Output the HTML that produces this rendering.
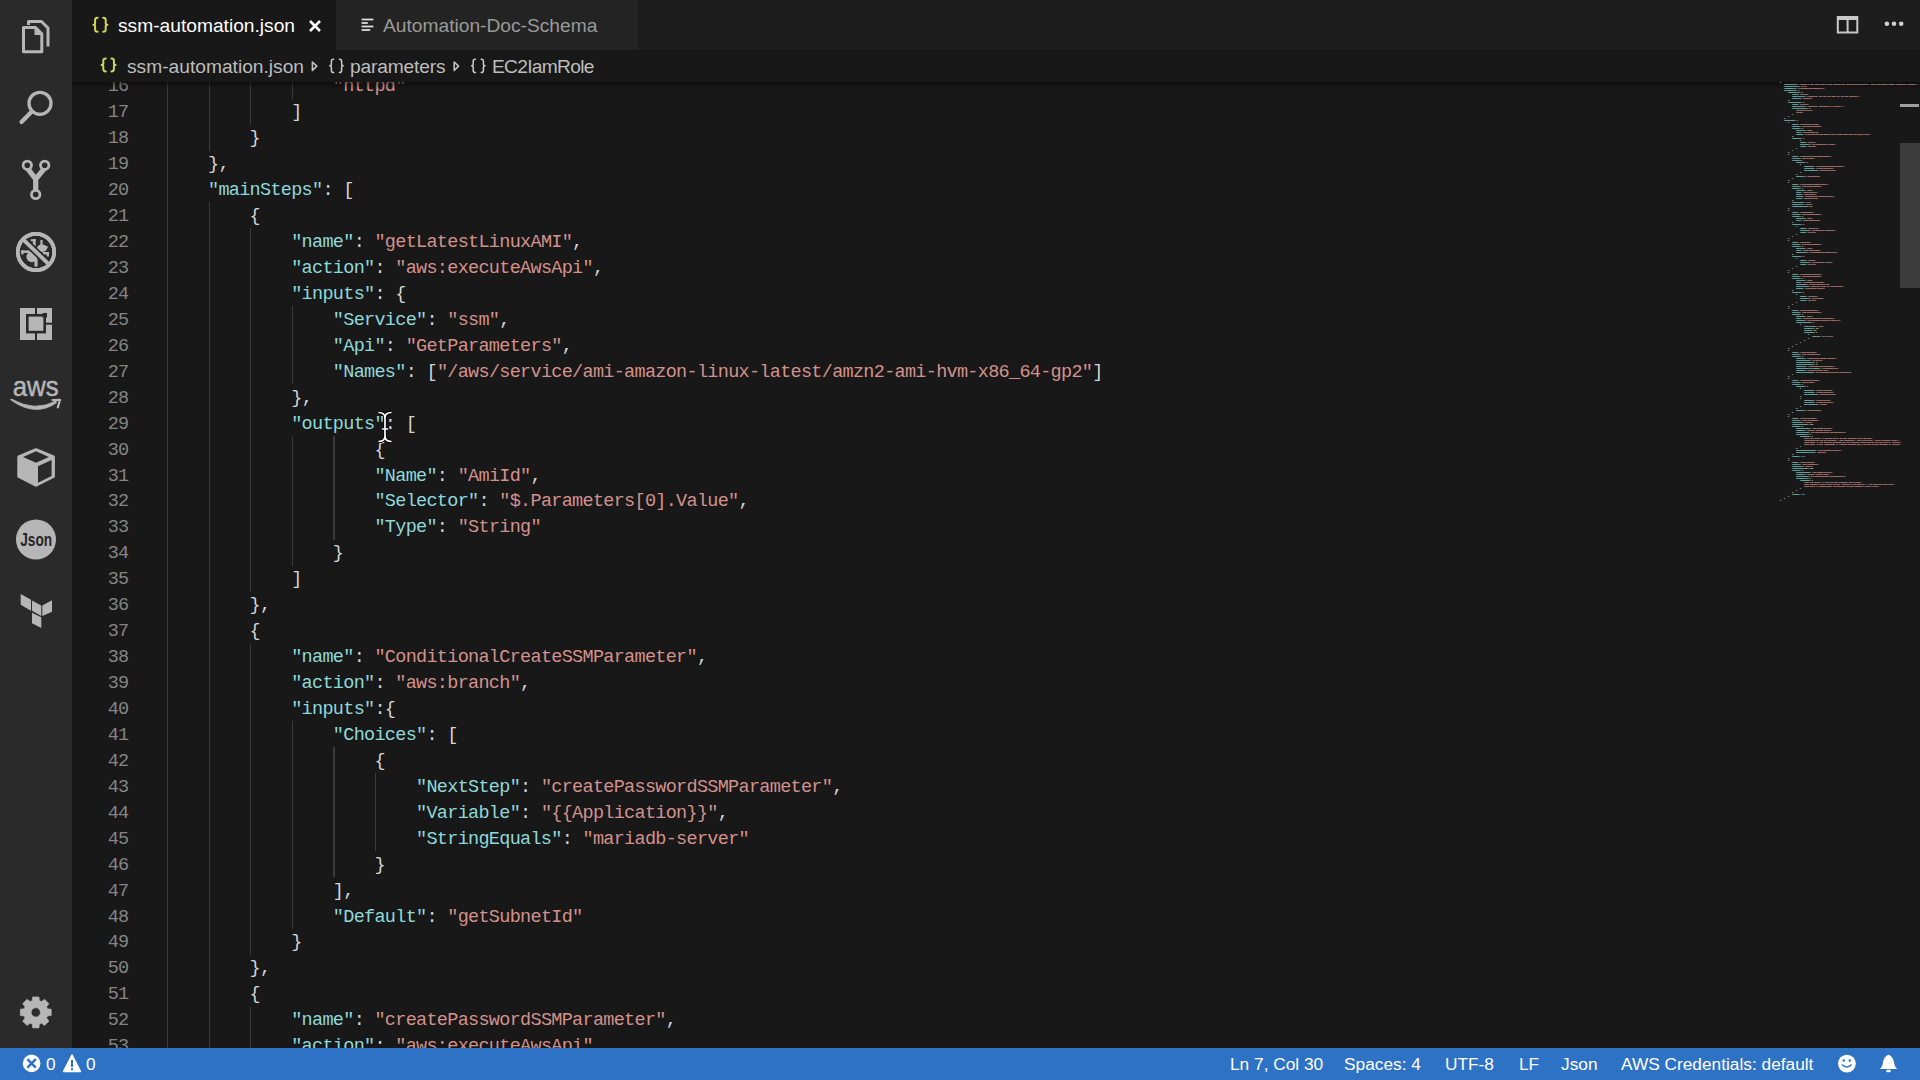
<!DOCTYPE html>
<html><head><meta charset="utf-8"><style>
*{box-sizing:border-box}
html,body{margin:0;padding:0;width:1920px;height:1080px;overflow:hidden;background:#181818;font-family:"Liberation Sans",sans-serif}
.abs{position:absolute}
#act{position:absolute;left:0;top:0;width:72px;height:1048px;background:#2a2a2a}
#tabs{position:absolute;left:72px;top:0;width:1848px;height:50px;background:#1d1d1d}
#tab1{position:absolute;left:0;top:0;width:264px;height:50px;background:#181818}
#tab2{position:absolute;left:264px;top:0;width:302px;height:50px;background:#232323}
#crumbs{position:absolute;left:72px;top:50px;width:1848px;height:32px;background:#181818}
#editor{position:absolute;left:72px;top:82px;width:1848px;height:966px;background:#181818;overflow:hidden}
.ln{position:absolute;left:94.4px;height:25.943px;line-height:25.943px;white-space:pre;font-family:"Liberation Mono",monospace;font-size:18.5px;letter-spacing:-0.700px;color:#d4d4d4}
.num{position:absolute;left:0;width:56.5px;text-align:right;height:25.943px;line-height:25.943px;font-family:"Liberation Mono",monospace;font-size:18.5px;letter-spacing:-0.700px;color:#858585}
.g{position:absolute;width:1.3px;background:#3a3a3a}
#shadow{position:absolute;left:0;top:0;width:1848px;height:7px;background:linear-gradient(rgba(0,0,0,0.45),rgba(0,0,0,0))}
#status{position:absolute;left:0;top:1048px;width:1920px;height:32px;background:#2e72c5;color:#fff;font-size:17.3px}
.st{position:absolute;top:0;height:32px;line-height:32px;white-space:pre}
.tabt{position:absolute;top:1px;height:50px;line-height:50px;white-space:pre;font-size:19.2px}
.cr{position:absolute;top:0.5px;height:32px;line-height:32px;white-space:pre;font-size:19.2px;color:#bdbdbd}
</style></head><body>
<div id="act">
<svg width="72" height="1048" viewBox="0 0 72 1048" style="position:absolute;left:0;top:0">
 <g fill="none" stroke="#b6b6b6" stroke-width="3" stroke-linejoin="round">
  <path d="M28.5 25 V21.5 H41.5 L48 28 V46.5"/>
  <path d="M23.5 27.5 H35.5 L41.8 33.8 V51.8 H23.5 Z"/>
 </g>
 <path d="M34.5 27 V35 H42.5 Z" fill="#b6b6b6"/>
 <circle cx="40" cy="103.3" r="11" fill="none" stroke="#b6b6b6" stroke-width="3.3"/>
 <line x1="31.8" y1="111.6" x2="21.5" y2="122" stroke="#b6b6b6" stroke-width="4.2" stroke-linecap="round"/>
 <g fill="none" stroke="#b6b6b6">
  <circle cx="27.3" cy="165.3" r="4.2" stroke-width="2.8"/>
  <circle cx="44.7" cy="165.3" r="4.2" stroke-width="2.8"/>
  <circle cx="35.7" cy="194.5" r="4.2" stroke-width="2.8"/>
  <path d="M28.3 169.3 L35.7 179 L43.7 169.3 M35.7 179 V190" stroke-width="5.2"/>
 </g>
 <circle cx="36" cy="252" r="18.2" fill="none" stroke="#b6b6b6" stroke-width="3.7"/>
 <g fill="#b6b6b6">
  <rect x="30.8" y="239.2" width="5" height="2"/>
  <rect x="32.8" y="239.2" width="2.8" height="7"/>
  <rect x="40.4" y="240" width="2.2" height="6"/>
  <ellipse cx="42" cy="248.3" rx="5" ry="3.8"/>
  <rect x="42.6" y="246" width="5" height="2.2"/>
  <rect x="42.6" y="252" width="6.4" height="2.5"/>
  <rect x="46.6" y="252" width="2.4" height="4.5"/>
  <rect x="21.3" y="250.4" width="9" height="2.5"/>
  <rect x="21.3" y="250.4" width="2.2" height="4"/>
  <circle cx="31.8" cy="256.8" r="5.4"/>
  <rect x="34.4" y="258.6" width="3.2" height="8"/>
 </g>
 <line x1="22.8" y1="239.2" x2="49.2" y2="264.6" stroke="#2a2a2a" stroke-width="7.2"/>
 <line x1="22.5" y1="238.9" x2="49.5" y2="264.9" stroke="#b6b6b6" stroke-width="3.9"/>
 <circle cx="36" cy="252" r="18.2" fill="none" stroke="#b6b6b6" stroke-width="3.7"/>
 <g>
  <rect x="20" y="308" width="32" height="32" fill="#b6b6b6"/>
  <rect x="27.3" y="315.3" width="17.4" height="16.8" fill="none" stroke="#2a2a2a" stroke-width="2.6"/>
  <rect x="35" y="308" width="2" height="7" fill="#2a2a2a"/>
  <rect x="35" y="332" width="2" height="8" fill="#2a2a2a"/>
  <rect x="46" y="322.7" width="6" height="2" fill="#2a2a2a"/>
  <rect x="42.6" y="313" width="4.4" height="4.5" fill="#2a2a2a"/>
 </g>
 <text x="35.7" y="396" text-anchor="middle" font-family="Liberation Sans" font-size="28.5" fill="#b6b6b6" stroke="#b6b6b6" stroke-width="0.5" textLength="46" lengthAdjust="spacingAndGlyphs">aws</text>
 <path d="M10.6 399.8 Q35 417.5 56.5 402.8 L56 400.8 Q35 412.5 11.4 399 Z" fill="#b6b6b6" stroke="#b6b6b6" stroke-width="0.8" stroke-linejoin="round"/>
 <path d="M52.5 400 L60 399.8 L57.8 407.5" fill="none" stroke="#b6b6b6" stroke-width="2.2" stroke-linecap="round" stroke-linejoin="round"/>
 <g stroke="#b6b6b6" stroke-width="3" stroke-linejoin="round">
  <path d="M36 449.7 L53.4 457 V476.5 L36 485.2 L18.8 476.5 V457 Z" fill="#b6b6b6"/>
  <path d="M23.1 456.9 L36 451.3 L48.9 456.9 L36 462.7 Z" fill="#2a2a2a" stroke="none"/>
  <path d="M38 466.2 L51.6 460 V476 L38 482.7 Z" fill="#2a2a2a" stroke="none"/>
 </g>
 <circle cx="36" cy="539.5" r="20" fill="#b6b6b6"/>
 <text x="36.2" y="546.2" text-anchor="middle" font-family="Liberation Sans" font-weight="bold" font-size="17.6" fill="#262626" textLength="32" lengthAdjust="spacingAndGlyphs">Json</text>
 <g fill="#b6b6b6">
  <path d="M20.7 594 L31 599.8 V610.7 L20.7 604.7 Z"/>
  <path d="M32 600.5 L41.3 605.5 V616 L32 610.7 Z"/>
  <path d="M42.3 605.5 L52 600.3 V611.7 L42.3 616 Z"/>
  <path d="M32 612.7 L41.3 617.3 V628 L32 623.3 Z"/>
 </g>
 <g transform="translate(35.8 1012.4)" fill="#b6b6b6">
  <path id="gear" d="M-3.64 -11.64 L-3.13 -15.49 L3.13 -15.49 L3.64 -11.64 A12.2 12.2 0 0 1 5.66 -10.81 L8.74 -13.16 L13.16 -8.74 L10.81 -5.66 A12.2 12.2 0 0 1 11.64 -3.64 L15.49 -3.13 L15.49 3.13 L11.64 3.64 A12.2 12.2 0 0 1 10.81 5.66 L13.16 8.74 L8.74 13.16 L5.66 10.81 A12.2 12.2 0 0 1 3.64 11.64 L3.13 15.49 L-3.13 15.49 L-3.64 11.64 A12.2 12.2 0 0 1 -5.66 10.81 L-8.74 13.16 L-13.16 8.74 L-10.81 5.66 A12.2 12.2 0 0 1 -11.64 3.64 L-15.49 3.13 L-15.49 -3.13 L-11.64 -3.64 A12.2 12.2 0 0 1 -10.81 -5.66 L-13.16 -8.74 L-8.74 -13.16 L-5.66 -10.81 A12.2 12.2 0 0 1 -3.64 -11.64 Z M0 -4.6 A4.6 4.6 0 1 0 0 4.6 A4.6 4.6 0 1 0 0 -4.6 Z" stroke="#b6b6b6" stroke-width="0.6" stroke-linejoin="round" fill-rule="evenodd"/>
 </g>
</svg>
</div>

<div id="tabs">
 <div id="tab1">
  <div class="tabt" style="left:46px;color:#ffffff">ssm-automation.json</div>
  <svg class="abs" style="left:236px;top:19px" width="14" height="14" viewBox="0 0 14 14"><path d="M2 2 L12 12 M12 2 L2 12" stroke="#ffffff" stroke-width="2.6"/></svg>
 </div>
 <div id="tab2">
  <svg class="abs" style="left:25px;top:18px" width="14" height="14" viewBox="0 0 14 14" fill="#dcdcdc"><rect x="0.6" y="0.6" width="11.8" height="1.8"/><rect x="0.6" y="4.1" width="6.2" height="1.8"/><rect x="0.6" y="7.6" width="11.8" height="1.8"/><rect x="0.6" y="11.1" width="8.6" height="1.8"/></svg>
  <div class="tabt" style="left:47px;color:#9a9a9a">Automation-Doc-Schema</div>
 </div>
 <svg class="abs" style="left:1764px;top:15px" width="24" height="20" viewBox="0 0 24 20"><rect x="1.8" y="2" width="19.5" height="15.5" fill="none" stroke="#c8c8c8" stroke-width="2"/><rect x="1.8" y="1.5" width="19.5" height="3.5" fill="#c8c8c8"/><rect x="10.6" y="2" width="2" height="15.5" fill="#c8c8c8"/></svg>
 <svg class="abs" style="left:1810px;top:18px" width="24" height="12" viewBox="0 0 24 12" fill="#d0d0d0"><circle cx="4.9" cy="5.7" r="2.3"/><circle cx="12" cy="5.7" r="2.3"/><circle cx="19.2" cy="5.7" r="2.3"/></svg>
</div>

<div id="crumbs">
 <div class="cr" style="left:55px">ssm-automation.json</div>
 <div class="cr" style="left:278px;letter-spacing:-0.17px">parameters</div>
 <div class="cr" style="left:420px;letter-spacing:-0.7px">EC2IamRole</div>
</div>

<svg class="abs" style="left:0;top:0;z-index:5" width="600" height="90" viewBox="0 0 600 90">
<path d="M97.59 17.80 Q95.10 17.80 95.10 20.04 V23.23 Q95.10 24.80 93.40 24.80 Q95.10 24.80 95.10 26.37 V29.56 Q95.10 31.80 97.59 31.80 M103.21 17.80 Q105.70 17.80 105.70 20.04 V23.23 Q105.70 24.80 107.40 24.80 Q105.70 24.80 105.70 26.37 V29.56 Q105.70 31.80 103.21 31.80" fill="none" stroke="#cfd85c" stroke-width="2.0" stroke-linecap="round" stroke-linejoin="round"/>
<path d="M105.79 58.40 Q103.30 58.40 103.30 60.50 V63.43 Q103.30 64.90 101.60 64.90 Q103.30 64.90 103.30 66.37 V69.30 Q103.30 71.40 105.79 71.40 M111.41 58.40 Q113.90 58.40 113.90 60.50 V63.43 Q113.90 64.90 115.60 64.90 Q113.90 64.90 113.90 66.37 V69.30 Q113.90 71.40 111.41 71.40" fill="none" stroke="#cfd85c" stroke-width="2.0" stroke-linecap="round" stroke-linejoin="round"/>
<path d="M333.58 59.15 Q331.39 59.15 331.39 61.22 V64.35 Q331.39 65.80 329.80 65.80 Q331.39 65.80 331.39 67.25 V70.38 Q331.39 72.45 333.58 72.45 M339.42 59.15 Q341.61 59.15 341.61 61.22 V64.35 Q341.61 65.80 343.20 65.80 Q341.61 65.80 341.61 67.25 V70.38 Q341.61 72.45 339.42 72.45" fill="none" stroke="#cccccc" stroke-width="1.5" stroke-linecap="round" stroke-linejoin="round"/>
<path d="M475.38 59.15 Q473.19 59.15 473.19 61.22 V64.35 Q473.19 65.80 471.60 65.80 Q473.19 65.80 473.19 67.25 V70.38 Q473.19 72.45 475.38 72.45 M481.22 59.15 Q483.41 59.15 483.41 61.22 V64.35 Q483.41 65.80 485.00 65.80 Q483.41 65.80 483.41 67.25 V70.38 Q483.41 72.45 481.22 72.45" fill="none" stroke="#cccccc" stroke-width="1.5" stroke-linecap="round" stroke-linejoin="round"/>
<path d="M312.4 62 L316.8 66.2 L312.4 70.4 Z M454.2 62 L458.6 66.2 L454.2 70.4 Z" fill="none" stroke="#c0c0c0" stroke-width="1.6" stroke-linejoin="round"/>
</svg>
<div id="editor">
<div class="g" style="left:95.00px;top:-9.24px;height:985.83px"></div>
<div class="g" style="left:136.60px;top:-9.24px;height:77.83px"></div>
<div class="g" style="left:136.60px;top:120.47px;height:856.12px"></div>
<div class="g" style="left:178.20px;top:-9.24px;height:51.89px"></div>
<div class="g" style="left:178.20px;top:146.42px;height:363.20px"></div>
<div class="g" style="left:178.20px;top:561.50px;height:311.32px"></div>
<div class="g" style="left:178.20px;top:924.70px;height:51.89px"></div>
<div class="g" style="left:219.80px;top:-9.24px;height:25.94px"></div>
<div class="g" style="left:219.80px;top:224.24px;height:77.83px"></div>
<div class="g" style="left:219.80px;top:353.96px;height:129.71px"></div>
<div class="g" style="left:219.80px;top:639.33px;height:207.54px"></div>
<div class="g" style="left:261.40px;top:353.96px;height:103.77px"></div>
<div class="g" style="left:261.40px;top:665.28px;height:129.72px"></div>
<div class="g" style="left:303.00px;top:691.22px;height:77.83px"></div>
<div class="ln" style="top:-7.64px">                <span style="color:#d4918c">&quot;httpd&quot;</span></div>
<div class="num" style="top:-7.64px">16</div>
<div class="ln" style="top:18.30px">            <span style="color:#d4d4d4">]</span></div>
<div class="num" style="top:18.30px">17</div>
<div class="ln" style="top:44.24px">        <span style="color:#d4d4d4">}</span></div>
<div class="num" style="top:44.24px">18</div>
<div class="ln" style="top:70.19px">    <span style="color:#d4d4d4">}</span><span style="color:#d4d4d4">,</span></div>
<div class="num" style="top:70.19px">19</div>
<div class="ln" style="top:96.13px">    <span style="color:#8fd8da">&quot;mainSteps&quot;</span><span style="color:#d4d4d4">:</span> <span style="color:#d4d4d4">[</span></div>
<div class="num" style="top:96.13px">20</div>
<div class="ln" style="top:122.07px">        <span style="color:#d4d4d4">{</span></div>
<div class="num" style="top:122.07px">21</div>
<div class="ln" style="top:148.02px">            <span style="color:#8fd8da">&quot;name&quot;</span><span style="color:#d4d4d4">:</span> <span style="color:#d4918c">&quot;getLatestLinuxAMI&quot;</span><span style="color:#d4d4d4">,</span></div>
<div class="num" style="top:148.02px">22</div>
<div class="ln" style="top:173.96px">            <span style="color:#8fd8da">&quot;action&quot;</span><span style="color:#d4d4d4">:</span> <span style="color:#d4918c">&quot;aws:executeAwsApi&quot;</span><span style="color:#d4d4d4">,</span></div>
<div class="num" style="top:173.96px">23</div>
<div class="ln" style="top:199.90px">            <span style="color:#8fd8da">&quot;inputs&quot;</span><span style="color:#d4d4d4">:</span> <span style="color:#d4d4d4">{</span></div>
<div class="num" style="top:199.90px">24</div>
<div class="ln" style="top:225.84px">                <span style="color:#8fd8da">&quot;Service&quot;</span><span style="color:#d4d4d4">:</span> <span style="color:#d4918c">&quot;ssm&quot;</span><span style="color:#d4d4d4">,</span></div>
<div class="num" style="top:225.84px">25</div>
<div class="ln" style="top:251.79px">                <span style="color:#8fd8da">&quot;Api&quot;</span><span style="color:#d4d4d4">:</span> <span style="color:#d4918c">&quot;GetParameters&quot;</span><span style="color:#d4d4d4">,</span></div>
<div class="num" style="top:251.79px">26</div>
<div class="ln" style="top:277.73px">                <span style="color:#8fd8da">&quot;Names&quot;</span><span style="color:#d4d4d4">:</span> <span style="color:#d4d4d4">[</span><span style="color:#d4918c">&quot;/aws/service/ami-amazon-linux-latest/amzn2-ami-hvm-x86_64-gp2&quot;</span><span style="color:#d4d4d4">]</span></div>
<div class="num" style="top:277.73px">27</div>
<div class="ln" style="top:303.67px">            <span style="color:#d4d4d4">}</span><span style="color:#d4d4d4">,</span></div>
<div class="num" style="top:303.67px">28</div>
<div class="ln" style="top:329.62px">            <span style="color:#8fd8da">&quot;outputs&quot;</span><span style="color:#d4d4d4">:</span> <span style="color:#d4d4d4">[</span></div>
<div class="num" style="top:329.62px">29</div>
<div class="ln" style="top:355.56px">                    <span style="color:#d4d4d4">{</span></div>
<div class="num" style="top:355.56px">30</div>
<div class="ln" style="top:381.50px">                    <span style="color:#8fd8da">&quot;Name&quot;</span><span style="color:#d4d4d4">:</span> <span style="color:#d4918c">&quot;AmiId&quot;</span><span style="color:#d4d4d4">,</span></div>
<div class="num" style="top:381.50px">31</div>
<div class="ln" style="top:407.45px">                    <span style="color:#8fd8da">&quot;Selector&quot;</span><span style="color:#d4d4d4">:</span> <span style="color:#d4918c">&quot;$.Parameters[0].Value&quot;</span><span style="color:#d4d4d4">,</span></div>
<div class="num" style="top:407.45px">32</div>
<div class="ln" style="top:433.39px">                    <span style="color:#8fd8da">&quot;Type&quot;</span><span style="color:#d4d4d4">:</span> <span style="color:#d4918c">&quot;String&quot;</span></div>
<div class="num" style="top:433.39px">33</div>
<div class="ln" style="top:459.33px">                <span style="color:#d4d4d4">}</span></div>
<div class="num" style="top:459.33px">34</div>
<div class="ln" style="top:485.27px">            <span style="color:#d4d4d4">]</span></div>
<div class="num" style="top:485.27px">35</div>
<div class="ln" style="top:511.22px">        <span style="color:#d4d4d4">}</span><span style="color:#d4d4d4">,</span></div>
<div class="num" style="top:511.22px">36</div>
<div class="ln" style="top:537.16px">        <span style="color:#d4d4d4">{</span></div>
<div class="num" style="top:537.16px">37</div>
<div class="ln" style="top:563.10px">            <span style="color:#8fd8da">&quot;name&quot;</span><span style="color:#d4d4d4">:</span> <span style="color:#d4918c">&quot;ConditionalCreateSSMParameter&quot;</span><span style="color:#d4d4d4">,</span></div>
<div class="num" style="top:563.10px">38</div>
<div class="ln" style="top:589.05px">            <span style="color:#8fd8da">&quot;action&quot;</span><span style="color:#d4d4d4">:</span> <span style="color:#d4918c">&quot;aws:branch&quot;</span><span style="color:#d4d4d4">,</span></div>
<div class="num" style="top:589.05px">39</div>
<div class="ln" style="top:614.99px">            <span style="color:#8fd8da">&quot;inputs&quot;</span><span style="color:#d4d4d4">:</span><span style="color:#d4d4d4">{</span></div>
<div class="num" style="top:614.99px">40</div>
<div class="ln" style="top:640.93px">                <span style="color:#8fd8da">&quot;Choices&quot;</span><span style="color:#d4d4d4">:</span> <span style="color:#d4d4d4">[</span></div>
<div class="num" style="top:640.93px">41</div>
<div class="ln" style="top:666.88px">                    <span style="color:#d4d4d4">{</span></div>
<div class="num" style="top:666.88px">42</div>
<div class="ln" style="top:692.82px">                        <span style="color:#8fd8da">&quot;NextStep&quot;</span><span style="color:#d4d4d4">:</span> <span style="color:#d4918c">&quot;createPasswordSSMParameter&quot;</span><span style="color:#d4d4d4">,</span></div>
<div class="num" style="top:692.82px">43</div>
<div class="ln" style="top:718.76px">                        <span style="color:#8fd8da">&quot;Variable&quot;</span><span style="color:#d4d4d4">:</span> <span style="color:#d4918c">&quot;{{Application}}&quot;</span><span style="color:#d4d4d4">,</span></div>
<div class="num" style="top:718.76px">44</div>
<div class="ln" style="top:744.70px">                        <span style="color:#8fd8da">&quot;StringEquals&quot;</span><span style="color:#d4d4d4">:</span> <span style="color:#d4918c">&quot;mariadb-server&quot;</span></div>
<div class="num" style="top:744.70px">45</div>
<div class="ln" style="top:770.65px">                    <span style="color:#d4d4d4">}</span></div>
<div class="num" style="top:770.65px">46</div>
<div class="ln" style="top:796.59px">                <span style="color:#d4d4d4">]</span><span style="color:#d4d4d4">,</span></div>
<div class="num" style="top:796.59px">47</div>
<div class="ln" style="top:822.53px">                <span style="color:#8fd8da">&quot;Default&quot;</span><span style="color:#d4d4d4">:</span> <span style="color:#d4918c">&quot;getSubnetId&quot;</span></div>
<div class="num" style="top:822.53px">48</div>
<div class="ln" style="top:848.48px">            <span style="color:#d4d4d4">}</span></div>
<div class="num" style="top:848.48px">49</div>
<div class="ln" style="top:874.42px">        <span style="color:#d4d4d4">}</span><span style="color:#d4d4d4">,</span></div>
<div class="num" style="top:874.42px">50</div>
<div class="ln" style="top:900.36px">        <span style="color:#d4d4d4">{</span></div>
<div class="num" style="top:900.36px">51</div>
<div class="ln" style="top:926.30px">            <span style="color:#8fd8da">&quot;name&quot;</span><span style="color:#d4d4d4">:</span> <span style="color:#d4918c">&quot;createPasswordSSMParameter&quot;</span><span style="color:#d4d4d4">,</span></div>
<div class="num" style="top:926.30px">52</div>
<div class="ln" style="top:952.25px">            <span style="color:#8fd8da">&quot;action&quot;</span><span style="color:#d4d4d4">:</span> <span style="color:#d4918c">&quot;aws:executeAwsApi&quot;</span><span style="color:#d4d4d4">,</span></div>
<div class="num" style="top:952.25px">53</div>
<div id="shadow"></div>
<svg class="abs" style="left:0;top:0" width="1848" height="966" viewBox="72 82 1848 966">
<g transform="translate(1780 80.6) scale(0.16667 0.2)" font-family="Liberation Mono" font-size="10" font-weight="bold" stroke-width="1.2" opacity="0.8" style="white-space:pre">
<text y="13.2"><tspan x="0" fill="#d4d4d4" stroke="#d4d4d4">{</tspan></text>
<text y="23.2"><tspan x="24" fill="#8fd8da" stroke="#8fd8da">&quot;description&quot;</tspan><tspan x="102" fill="#d4d4d4" stroke="#d4d4d4">:</tspan><tspan x="114" fill="#d4918c" stroke="#d4918c">&quot;Creates a LAMP stack with an EC2 instance and optional MariaDB server, using AWS Systems Manager Automation document.&quot;</tspan><tspan x="828" fill="#d4d4d4" stroke="#d4d4d4">,</tspan></text>
<text y="33.2"><tspan x="24" fill="#8fd8da" stroke="#8fd8da">&quot;schemaVersion&quot;</tspan><tspan x="114" fill="#d4d4d4" stroke="#d4d4d4">:</tspan><tspan x="126" fill="#d4918c" stroke="#d4918c">&quot;0.3&quot;</tspan><tspan x="156" fill="#d4d4d4" stroke="#d4d4d4">,</tspan></text>
<text y="43.2"><tspan x="24" fill="#8fd8da" stroke="#8fd8da">&quot;assumeRole&quot;</tspan><tspan x="96" fill="#d4d4d4" stroke="#d4d4d4">:</tspan><tspan x="108" fill="#d4918c" stroke="#d4918c">&quot;{{AutomationAssumeRole}}&quot;</tspan><tspan x="264" fill="#d4d4d4" stroke="#d4d4d4">,</tspan></text>
<text y="53.2"><tspan x="24" fill="#8fd8da" stroke="#8fd8da">&quot;parameters&quot;</tspan><tspan x="96" fill="#d4d4d4" stroke="#d4d4d4">:</tspan><tspan x="108" fill="#d4d4d4" stroke="#d4d4d4">{</tspan></text>
<text y="63.2"><tspan x="48" fill="#8fd8da" stroke="#8fd8da">&quot;EC2IamRole&quot;</tspan><tspan x="120" fill="#d4d4d4" stroke="#d4d4d4">:</tspan><tspan x="132" fill="#d4d4d4" stroke="#d4d4d4">{</tspan></text>
<text y="73.2"><tspan x="72" fill="#8fd8da" stroke="#8fd8da">&quot;type&quot;</tspan><tspan x="108" fill="#d4d4d4" stroke="#d4d4d4">:</tspan><tspan x="120" fill="#d4918c" stroke="#d4918c">&quot;String&quot;</tspan><tspan x="168" fill="#d4d4d4" stroke="#d4d4d4">,</tspan></text>
<text y="83.2"><tspan x="72" fill="#8fd8da" stroke="#8fd8da">&quot;description&quot;</tspan><tspan x="150" fill="#d4d4d4" stroke="#d4d4d4">:</tspan><tspan x="162" fill="#d4918c" stroke="#d4918c">&quot;(Required) The IAM role name for the EC2 instance.&quot;</tspan><tspan x="474" fill="#d4d4d4" stroke="#d4d4d4">,</tspan></text>
<text y="93.2"><tspan x="72" fill="#8fd8da" stroke="#8fd8da">&quot;default&quot;</tspan><tspan x="126" fill="#d4d4d4" stroke="#d4d4d4">:</tspan><tspan x="138" fill="#d4918c" stroke="#d4918c">&quot;SSMRole&quot;</tspan></text>
<text y="103.2"><tspan x="48" fill="#d4d4d4" stroke="#d4d4d4">}</tspan><tspan x="54" fill="#d4d4d4" stroke="#d4d4d4">,</tspan></text>
<text y="113.2"><tspan x="48" fill="#8fd8da" stroke="#8fd8da">&quot;Application&quot;</tspan><tspan x="126" fill="#d4d4d4" stroke="#d4d4d4">:</tspan><tspan x="138" fill="#d4d4d4" stroke="#d4d4d4">{</tspan></text>
<text y="123.2"><tspan x="72" fill="#8fd8da" stroke="#8fd8da">&quot;type&quot;</tspan><tspan x="108" fill="#d4d4d4" stroke="#d4d4d4">:</tspan><tspan x="120" fill="#d4918c" stroke="#d4918c">&quot;String&quot;</tspan><tspan x="168" fill="#d4d4d4" stroke="#d4d4d4">,</tspan></text>
<text y="133.2"><tspan x="72" fill="#8fd8da" stroke="#8fd8da">&quot;description&quot;</tspan><tspan x="150" fill="#d4d4d4" stroke="#d4d4d4">:</tspan><tspan x="162" fill="#d4918c" stroke="#d4918c">&quot;(Required) Application to install.&quot;</tspan><tspan x="378" fill="#d4d4d4" stroke="#d4d4d4">,</tspan></text>
<text y="143.2"><tspan x="72" fill="#8fd8da" stroke="#8fd8da">&quot;allowedValues&quot;</tspan><tspan x="162" fill="#d4d4d4" stroke="#d4d4d4">:</tspan><tspan x="174" fill="#d4d4d4" stroke="#d4d4d4">[</tspan></text>
<text y="153.2"><tspan x="96" fill="#d4918c" stroke="#d4918c">&quot;mariadb-server&quot;</tspan><tspan x="192" fill="#d4d4d4" stroke="#d4d4d4">,</tspan></text>
<text y="163.2"><tspan x="96" fill="#d4918c" stroke="#d4918c">&quot;httpd&quot;</tspan></text>
<text y="173.2"><tspan x="72" fill="#d4d4d4" stroke="#d4d4d4">]</tspan></text>
<text y="183.2"><tspan x="48" fill="#d4d4d4" stroke="#d4d4d4">}</tspan></text>
<text y="193.2"><tspan x="24" fill="#d4d4d4" stroke="#d4d4d4">}</tspan><tspan x="30" fill="#d4d4d4" stroke="#d4d4d4">,</tspan></text>
<text y="203.2"><tspan x="24" fill="#8fd8da" stroke="#8fd8da">&quot;mainSteps&quot;</tspan><tspan x="90" fill="#d4d4d4" stroke="#d4d4d4">:</tspan><tspan x="102" fill="#d4d4d4" stroke="#d4d4d4">[</tspan></text>
<text y="213.2"><tspan x="48" fill="#d4d4d4" stroke="#d4d4d4">{</tspan></text>
<text y="223.2"><tspan x="72" fill="#8fd8da" stroke="#8fd8da">&quot;name&quot;</tspan><tspan x="108" fill="#d4d4d4" stroke="#d4d4d4">:</tspan><tspan x="120" fill="#d4918c" stroke="#d4918c">&quot;getLatestLinuxAMI&quot;</tspan><tspan x="234" fill="#d4d4d4" stroke="#d4d4d4">,</tspan></text>
<text y="233.2"><tspan x="72" fill="#8fd8da" stroke="#8fd8da">&quot;action&quot;</tspan><tspan x="120" fill="#d4d4d4" stroke="#d4d4d4">:</tspan><tspan x="132" fill="#d4918c" stroke="#d4918c">&quot;aws:executeAwsApi&quot;</tspan><tspan x="246" fill="#d4d4d4" stroke="#d4d4d4">,</tspan></text>
<text y="243.2"><tspan x="72" fill="#8fd8da" stroke="#8fd8da">&quot;inputs&quot;</tspan><tspan x="120" fill="#d4d4d4" stroke="#d4d4d4">:</tspan><tspan x="132" fill="#d4d4d4" stroke="#d4d4d4">{</tspan></text>
<text y="253.2"><tspan x="96" fill="#8fd8da" stroke="#8fd8da">&quot;Service&quot;</tspan><tspan x="150" fill="#d4d4d4" stroke="#d4d4d4">:</tspan><tspan x="162" fill="#d4918c" stroke="#d4918c">&quot;ssm&quot;</tspan><tspan x="192" fill="#d4d4d4" stroke="#d4d4d4">,</tspan></text>
<text y="263.2"><tspan x="96" fill="#8fd8da" stroke="#8fd8da">&quot;Api&quot;</tspan><tspan x="126" fill="#d4d4d4" stroke="#d4d4d4">:</tspan><tspan x="138" fill="#d4918c" stroke="#d4918c">&quot;GetParameters&quot;</tspan><tspan x="228" fill="#d4d4d4" stroke="#d4d4d4">,</tspan></text>
<text y="273.2"><tspan x="96" fill="#8fd8da" stroke="#8fd8da">&quot;Names&quot;</tspan><tspan x="138" fill="#d4d4d4" stroke="#d4d4d4">:</tspan><tspan x="150" fill="#d4d4d4" stroke="#d4d4d4">[</tspan><tspan x="156" fill="#d4918c" stroke="#d4918c">&quot;/aws/service/ami-amazon-linux-latest/amzn2-ami-hvm-x86_64-gp2&quot;</tspan><tspan x="534" fill="#d4d4d4" stroke="#d4d4d4">]</tspan></text>
<text y="283.2"><tspan x="72" fill="#d4d4d4" stroke="#d4d4d4">}</tspan><tspan x="78" fill="#d4d4d4" stroke="#d4d4d4">,</tspan></text>
<text y="293.2"><tspan x="72" fill="#8fd8da" stroke="#8fd8da">&quot;outputs&quot;</tspan><tspan x="126" fill="#d4d4d4" stroke="#d4d4d4">:</tspan><tspan x="138" fill="#d4d4d4" stroke="#d4d4d4">[</tspan></text>
<text y="303.2"><tspan x="120" fill="#d4d4d4" stroke="#d4d4d4">{</tspan></text>
<text y="313.2"><tspan x="120" fill="#8fd8da" stroke="#8fd8da">&quot;Name&quot;</tspan><tspan x="156" fill="#d4d4d4" stroke="#d4d4d4">:</tspan><tspan x="168" fill="#d4918c" stroke="#d4918c">&quot;AmiId&quot;</tspan><tspan x="210" fill="#d4d4d4" stroke="#d4d4d4">,</tspan></text>
<text y="323.2"><tspan x="120" fill="#8fd8da" stroke="#8fd8da">&quot;Selector&quot;</tspan><tspan x="180" fill="#d4d4d4" stroke="#d4d4d4">:</tspan><tspan x="192" fill="#d4918c" stroke="#d4918c">&quot;$.Parameters[0].Value&quot;</tspan><tspan x="330" fill="#d4d4d4" stroke="#d4d4d4">,</tspan></text>
<text y="333.2"><tspan x="120" fill="#8fd8da" stroke="#8fd8da">&quot;Type&quot;</tspan><tspan x="156" fill="#d4d4d4" stroke="#d4d4d4">:</tspan><tspan x="168" fill="#d4918c" stroke="#d4918c">&quot;String&quot;</tspan></text>
<text y="343.2"><tspan x="96" fill="#d4d4d4" stroke="#d4d4d4">}</tspan></text>
<text y="353.2"><tspan x="72" fill="#d4d4d4" stroke="#d4d4d4">]</tspan></text>
<text y="363.2"><tspan x="48" fill="#d4d4d4" stroke="#d4d4d4">}</tspan><tspan x="54" fill="#d4d4d4" stroke="#d4d4d4">,</tspan></text>
<text y="373.2"><tspan x="48" fill="#d4d4d4" stroke="#d4d4d4">{</tspan></text>
<text y="383.2"><tspan x="72" fill="#8fd8da" stroke="#8fd8da">&quot;name&quot;</tspan><tspan x="108" fill="#d4d4d4" stroke="#d4d4d4">:</tspan><tspan x="120" fill="#d4918c" stroke="#d4918c">&quot;ConditionalCreateSSMParameter&quot;</tspan><tspan x="306" fill="#d4d4d4" stroke="#d4d4d4">,</tspan></text>
<text y="393.2"><tspan x="72" fill="#8fd8da" stroke="#8fd8da">&quot;action&quot;</tspan><tspan x="120" fill="#d4d4d4" stroke="#d4d4d4">:</tspan><tspan x="132" fill="#d4918c" stroke="#d4918c">&quot;aws:branch&quot;</tspan><tspan x="204" fill="#d4d4d4" stroke="#d4d4d4">,</tspan></text>
<text y="403.2"><tspan x="72" fill="#8fd8da" stroke="#8fd8da">&quot;inputs&quot;</tspan><tspan x="120" fill="#d4d4d4" stroke="#d4d4d4">:</tspan><tspan x="126" fill="#d4d4d4" stroke="#d4d4d4">{</tspan></text>
<text y="413.2"><tspan x="96" fill="#8fd8da" stroke="#8fd8da">&quot;Choices&quot;</tspan><tspan x="150" fill="#d4d4d4" stroke="#d4d4d4">:</tspan><tspan x="162" fill="#d4d4d4" stroke="#d4d4d4">[</tspan></text>
<text y="423.2"><tspan x="120" fill="#d4d4d4" stroke="#d4d4d4">{</tspan></text>
<text y="433.2"><tspan x="144" fill="#8fd8da" stroke="#8fd8da">&quot;NextStep&quot;</tspan><tspan x="204" fill="#d4d4d4" stroke="#d4d4d4">:</tspan><tspan x="216" fill="#d4918c" stroke="#d4918c">&quot;createPasswordSSMParameter&quot;</tspan><tspan x="384" fill="#d4d4d4" stroke="#d4d4d4">,</tspan></text>
<text y="443.2"><tspan x="144" fill="#8fd8da" stroke="#8fd8da">&quot;Variable&quot;</tspan><tspan x="204" fill="#d4d4d4" stroke="#d4d4d4">:</tspan><tspan x="216" fill="#d4918c" stroke="#d4918c">&quot;{{Application}}&quot;</tspan><tspan x="318" fill="#d4d4d4" stroke="#d4d4d4">,</tspan></text>
<text y="453.2"><tspan x="144" fill="#8fd8da" stroke="#8fd8da">&quot;StringEquals&quot;</tspan><tspan x="228" fill="#d4d4d4" stroke="#d4d4d4">:</tspan><tspan x="240" fill="#d4918c" stroke="#d4918c">&quot;mariadb-server&quot;</tspan></text>
<text y="463.2"><tspan x="120" fill="#d4d4d4" stroke="#d4d4d4">}</tspan></text>
<text y="473.2"><tspan x="96" fill="#d4d4d4" stroke="#d4d4d4">]</tspan><tspan x="102" fill="#d4d4d4" stroke="#d4d4d4">,</tspan></text>
<text y="483.2"><tspan x="96" fill="#8fd8da" stroke="#8fd8da">&quot;Default&quot;</tspan><tspan x="150" fill="#d4d4d4" stroke="#d4d4d4">:</tspan><tspan x="162" fill="#d4918c" stroke="#d4918c">&quot;getSubnetId&quot;</tspan></text>
<text y="493.2"><tspan x="72" fill="#d4d4d4" stroke="#d4d4d4">}</tspan></text>
<text y="503.2"><tspan x="48" fill="#d4d4d4" stroke="#d4d4d4">}</tspan><tspan x="54" fill="#d4d4d4" stroke="#d4d4d4">,</tspan></text>
<text y="513.2"><tspan x="48" fill="#d4d4d4" stroke="#d4d4d4">{</tspan></text>
<text y="523.2"><tspan x="72" fill="#8fd8da" stroke="#8fd8da">&quot;name&quot;</tspan><tspan x="108" fill="#d4d4d4" stroke="#d4d4d4">:</tspan><tspan x="120" fill="#d4918c" stroke="#d4918c">&quot;createPasswordSSMParameter&quot;</tspan><tspan x="288" fill="#d4d4d4" stroke="#d4d4d4">,</tspan></text>
<text y="533.2"><tspan x="72" fill="#8fd8da" stroke="#8fd8da">&quot;action&quot;</tspan><tspan x="120" fill="#d4d4d4" stroke="#d4d4d4">:</tspan><tspan x="132" fill="#d4918c" stroke="#d4918c">&quot;aws:executeAwsApi&quot;</tspan><tspan x="246" fill="#d4d4d4" stroke="#d4d4d4">,</tspan></text>
<text y="543.2"><tspan x="72" fill="#8fd8da" stroke="#8fd8da">&quot;inputs&quot;</tspan><tspan x="120" fill="#d4d4d4" stroke="#d4d4d4">:</tspan><tspan x="132" fill="#d4d4d4" stroke="#d4d4d4">{</tspan></text>
<text y="553.2"><tspan x="96" fill="#8fd8da" stroke="#8fd8da">&quot;Service&quot;</tspan><tspan x="150" fill="#d4d4d4" stroke="#d4d4d4">:</tspan><tspan x="162" fill="#d4918c" stroke="#d4918c">&quot;ssm&quot;</tspan><tspan x="192" fill="#d4d4d4" stroke="#d4d4d4">,</tspan></text>
<text y="563.2"><tspan x="96" fill="#8fd8da" stroke="#8fd8da">&quot;Api&quot;</tspan><tspan x="126" fill="#d4d4d4" stroke="#d4d4d4">:</tspan><tspan x="138" fill="#d4918c" stroke="#d4918c">&quot;PutParameter&quot;</tspan><tspan x="222" fill="#d4d4d4" stroke="#d4d4d4">,</tspan></text>
<text y="573.2"><tspan x="96" fill="#8fd8da" stroke="#8fd8da">&quot;Name&quot;</tspan><tspan x="132" fill="#d4d4d4" stroke="#d4d4d4">:</tspan><tspan x="144" fill="#d4918c" stroke="#d4918c">&quot;DBPassword&quot;</tspan><tspan x="216" fill="#d4d4d4" stroke="#d4d4d4">,</tspan></text>
<text y="583.2"><tspan x="96" fill="#8fd8da" stroke="#8fd8da">&quot;Value&quot;</tspan><tspan x="138" fill="#d4d4d4" stroke="#d4d4d4">:</tspan><tspan x="150" fill="#d4918c" stroke="#d4918c">&quot;{{automation:EXECUTION_ID}}&quot;</tspan><tspan x="324" fill="#d4d4d4" stroke="#d4d4d4">,</tspan></text>
<text y="593.2"><tspan x="96" fill="#8fd8da" stroke="#8fd8da">&quot;Type&quot;</tspan><tspan x="132" fill="#d4d4d4" stroke="#d4d4d4">:</tspan><tspan x="144" fill="#d4918c" stroke="#d4918c">&quot;SecureString&quot;</tspan></text>
<text y="603.2"><tspan x="72" fill="#d4d4d4" stroke="#d4d4d4">}</tspan><tspan x="78" fill="#d4d4d4" stroke="#d4d4d4">,</tspan></text>
<text y="613.2"><tspan x="72" fill="#8fd8da" stroke="#8fd8da">&quot;isCritical&quot;</tspan><tspan x="144" fill="#d4d4d4" stroke="#d4d4d4">:</tspan><tspan x="156" fill="#569cd6" stroke="#569cd6">true</tspan><tspan x="180" fill="#d4d4d4" stroke="#d4d4d4">,</tspan></text>
<text y="623.2"><tspan x="72" fill="#8fd8da" stroke="#8fd8da">&quot;onFailure&quot;</tspan><tspan x="138" fill="#d4d4d4" stroke="#d4d4d4">:</tspan><tspan x="150" fill="#d4918c" stroke="#d4918c">&quot;Abort&quot;</tspan><tspan x="192" fill="#d4d4d4" stroke="#d4d4d4">,</tspan></text>
<text y="633.2"><tspan x="72" fill="#8fd8da" stroke="#8fd8da">&quot;timeoutSeconds&quot;</tspan><tspan x="168" fill="#d4d4d4" stroke="#d4d4d4">:</tspan><tspan x="180" fill="#b5cea8" stroke="#b5cea8">60</tspan></text>
<text y="643.2"><tspan x="48" fill="#d4d4d4" stroke="#d4d4d4">}</tspan><tspan x="54" fill="#d4d4d4" stroke="#d4d4d4">,</tspan></text>
<text y="653.2"><tspan x="48" fill="#d4d4d4" stroke="#d4d4d4">{</tspan></text>
<text y="663.2"><tspan x="72" fill="#8fd8da" stroke="#8fd8da">&quot;name&quot;</tspan><tspan x="108" fill="#d4d4d4" stroke="#d4d4d4">:</tspan><tspan x="120" fill="#d4918c" stroke="#d4918c">&quot;getSubnetId&quot;</tspan><tspan x="198" fill="#d4d4d4" stroke="#d4d4d4">,</tspan></text>
<text y="673.2"><tspan x="72" fill="#8fd8da" stroke="#8fd8da">&quot;action&quot;</tspan><tspan x="120" fill="#d4d4d4" stroke="#d4d4d4">:</tspan><tspan x="132" fill="#d4918c" stroke="#d4918c">&quot;aws:executeAwsApi&quot;</tspan><tspan x="246" fill="#d4d4d4" stroke="#d4d4d4">,</tspan></text>
<text y="683.2"><tspan x="72" fill="#8fd8da" stroke="#8fd8da">&quot;inputs&quot;</tspan><tspan x="120" fill="#d4d4d4" stroke="#d4d4d4">:</tspan><tspan x="132" fill="#d4d4d4" stroke="#d4d4d4">{</tspan></text>
<text y="693.2"><tspan x="96" fill="#8fd8da" stroke="#8fd8da">&quot;Service&quot;</tspan><tspan x="150" fill="#d4d4d4" stroke="#d4d4d4">:</tspan><tspan x="162" fill="#d4918c" stroke="#d4918c">&quot;ec2&quot;</tspan><tspan x="192" fill="#d4d4d4" stroke="#d4d4d4">,</tspan></text>
<text y="703.2"><tspan x="96" fill="#8fd8da" stroke="#8fd8da">&quot;Api&quot;</tspan><tspan x="126" fill="#d4d4d4" stroke="#d4d4d4">:</tspan><tspan x="138" fill="#d4918c" stroke="#d4918c">&quot;DescribeSubnets&quot;</tspan></text>
<text y="713.2"><tspan x="72" fill="#d4d4d4" stroke="#d4d4d4">}</tspan><tspan x="78" fill="#d4d4d4" stroke="#d4d4d4">,</tspan></text>
<text y="723.2"><tspan x="72" fill="#8fd8da" stroke="#8fd8da">&quot;outputs&quot;</tspan><tspan x="126" fill="#d4d4d4" stroke="#d4d4d4">:</tspan><tspan x="138" fill="#d4d4d4" stroke="#d4d4d4">[</tspan></text>
<text y="733.2"><tspan x="96" fill="#d4d4d4" stroke="#d4d4d4">{</tspan></text>
<text y="743.2"><tspan x="120" fill="#8fd8da" stroke="#8fd8da">&quot;Name&quot;</tspan><tspan x="156" fill="#d4d4d4" stroke="#d4d4d4">:</tspan><tspan x="168" fill="#d4918c" stroke="#d4918c">&quot;SubnetId&quot;</tspan><tspan x="228" fill="#d4d4d4" stroke="#d4d4d4">,</tspan></text>
<text y="753.2"><tspan x="120" fill="#8fd8da" stroke="#8fd8da">&quot;Selector&quot;</tspan><tspan x="180" fill="#d4d4d4" stroke="#d4d4d4">:</tspan><tspan x="192" fill="#d4918c" stroke="#d4918c">&quot;$.Subnets[0].SubnetId&quot;</tspan><tspan x="330" fill="#d4d4d4" stroke="#d4d4d4">,</tspan></text>
<text y="763.2"><tspan x="120" fill="#8fd8da" stroke="#8fd8da">&quot;Type&quot;</tspan><tspan x="156" fill="#d4d4d4" stroke="#d4d4d4">:</tspan><tspan x="168" fill="#d4918c" stroke="#d4918c">&quot;String&quot;</tspan></text>
<text y="773.2"><tspan x="96" fill="#d4d4d4" stroke="#d4d4d4">}</tspan></text>
<text y="783.2"><tspan x="72" fill="#d4d4d4" stroke="#d4d4d4">]</tspan></text>
<text y="793.2"><tspan x="48" fill="#d4d4d4" stroke="#d4d4d4">}</tspan><tspan x="54" fill="#d4d4d4" stroke="#d4d4d4">,</tspan></text>
<text y="803.2"><tspan x="48" fill="#d4d4d4" stroke="#d4d4d4">{</tspan></text>
<text y="813.2"><tspan x="72" fill="#8fd8da" stroke="#8fd8da">&quot;name&quot;</tspan><tspan x="108" fill="#d4d4d4" stroke="#d4d4d4">:</tspan><tspan x="120" fill="#d4918c" stroke="#d4918c">&quot;getVpcId&quot;</tspan><tspan x="180" fill="#d4d4d4" stroke="#d4d4d4">,</tspan></text>
<text y="823.2"><tspan x="72" fill="#8fd8da" stroke="#8fd8da">&quot;action&quot;</tspan><tspan x="120" fill="#d4d4d4" stroke="#d4d4d4">:</tspan><tspan x="132" fill="#d4918c" stroke="#d4918c">&quot;aws:executeAwsApi&quot;</tspan><tspan x="246" fill="#d4d4d4" stroke="#d4d4d4">,</tspan></text>
<text y="833.2"><tspan x="72" fill="#8fd8da" stroke="#8fd8da">&quot;inputs&quot;</tspan><tspan x="120" fill="#d4d4d4" stroke="#d4d4d4">:</tspan><tspan x="132" fill="#d4d4d4" stroke="#d4d4d4">{</tspan></text>
<text y="843.2"><tspan x="96" fill="#8fd8da" stroke="#8fd8da">&quot;Service&quot;</tspan><tspan x="150" fill="#d4d4d4" stroke="#d4d4d4">:</tspan><tspan x="162" fill="#d4918c" stroke="#d4918c">&quot;ec2&quot;</tspan><tspan x="192" fill="#d4d4d4" stroke="#d4d4d4">,</tspan></text>
<text y="853.2"><tspan x="96" fill="#8fd8da" stroke="#8fd8da">&quot;Api&quot;</tspan><tspan x="126" fill="#d4d4d4" stroke="#d4d4d4">:</tspan><tspan x="138" fill="#d4918c" stroke="#d4918c">&quot;DescribeSubnets&quot;</tspan><tspan x="240" fill="#d4d4d4" stroke="#d4d4d4">,</tspan></text>
<text y="863.2"><tspan x="96" fill="#8fd8da" stroke="#8fd8da">&quot;SubnetIds&quot;</tspan><tspan x="162" fill="#d4d4d4" stroke="#d4d4d4">:</tspan><tspan x="174" fill="#d4d4d4" stroke="#d4d4d4">[</tspan><tspan x="180" fill="#d4918c" stroke="#d4918c">&quot;{{getSubnetId.SubnetId}}&quot;</tspan><tspan x="336" fill="#d4d4d4" stroke="#d4d4d4">]</tspan></text>
<text y="873.2"><tspan x="72" fill="#d4d4d4" stroke="#d4d4d4">}</tspan><tspan x="78" fill="#d4d4d4" stroke="#d4d4d4">,</tspan></text>
<text y="883.2"><tspan x="72" fill="#8fd8da" stroke="#8fd8da">&quot;outputs&quot;</tspan><tspan x="126" fill="#d4d4d4" stroke="#d4d4d4">:</tspan><tspan x="138" fill="#d4d4d4" stroke="#d4d4d4">[</tspan></text>
<text y="893.2"><tspan x="96" fill="#d4d4d4" stroke="#d4d4d4">{</tspan></text>
<text y="903.2"><tspan x="120" fill="#8fd8da" stroke="#8fd8da">&quot;Name&quot;</tspan><tspan x="156" fill="#d4d4d4" stroke="#d4d4d4">:</tspan><tspan x="168" fill="#d4918c" stroke="#d4918c">&quot;VpcId&quot;</tspan><tspan x="210" fill="#d4d4d4" stroke="#d4d4d4">,</tspan></text>
<text y="913.2"><tspan x="120" fill="#8fd8da" stroke="#8fd8da">&quot;Selector&quot;</tspan><tspan x="180" fill="#d4d4d4" stroke="#d4d4d4">:</tspan><tspan x="192" fill="#d4918c" stroke="#d4918c">&quot;$.Subnets[0].VpcId&quot;</tspan><tspan x="312" fill="#d4d4d4" stroke="#d4d4d4">,</tspan></text>
<text y="923.2"><tspan x="120" fill="#8fd8da" stroke="#8fd8da">&quot;Type&quot;</tspan><tspan x="156" fill="#d4d4d4" stroke="#d4d4d4">:</tspan><tspan x="168" fill="#d4918c" stroke="#d4918c">&quot;String&quot;</tspan></text>
<text y="933.2"><tspan x="96" fill="#d4d4d4" stroke="#d4d4d4">}</tspan></text>
<text y="943.2"><tspan x="72" fill="#d4d4d4" stroke="#d4d4d4">]</tspan></text>
<text y="953.2"><tspan x="48" fill="#d4d4d4" stroke="#d4d4d4">}</tspan><tspan x="54" fill="#d4d4d4" stroke="#d4d4d4">,</tspan></text>
<text y="963.2"><tspan x="48" fill="#d4d4d4" stroke="#d4d4d4">{</tspan></text>
<text y="973.2"><tspan x="72" fill="#8fd8da" stroke="#8fd8da">&quot;name&quot;</tspan><tspan x="108" fill="#d4d4d4" stroke="#d4d4d4">:</tspan><tspan x="120" fill="#d4918c" stroke="#d4918c">&quot;createSecurityGroup&quot;</tspan><tspan x="246" fill="#d4d4d4" stroke="#d4d4d4">,</tspan></text>
<text y="983.2"><tspan x="72" fill="#8fd8da" stroke="#8fd8da">&quot;action&quot;</tspan><tspan x="120" fill="#d4d4d4" stroke="#d4d4d4">:</tspan><tspan x="132" fill="#d4918c" stroke="#d4918c">&quot;aws:executeAwsApi&quot;</tspan><tspan x="246" fill="#d4d4d4" stroke="#d4d4d4">,</tspan></text>
<text y="993.2"><tspan x="72" fill="#8fd8da" stroke="#8fd8da">&quot;inputs&quot;</tspan><tspan x="120" fill="#d4d4d4" stroke="#d4d4d4">:</tspan><tspan x="132" fill="#d4d4d4" stroke="#d4d4d4">{</tspan></text>
<text y="1003.2"><tspan x="96" fill="#8fd8da" stroke="#8fd8da">&quot;Service&quot;</tspan><tspan x="150" fill="#d4d4d4" stroke="#d4d4d4">:</tspan><tspan x="162" fill="#d4918c" stroke="#d4918c">&quot;ec2&quot;</tspan><tspan x="192" fill="#d4d4d4" stroke="#d4d4d4">,</tspan></text>
<text y="1013.2"><tspan x="96" fill="#8fd8da" stroke="#8fd8da">&quot;Api&quot;</tspan><tspan x="126" fill="#d4d4d4" stroke="#d4d4d4">:</tspan><tspan x="138" fill="#d4918c" stroke="#d4918c">&quot;CreateSecurityGroup&quot;</tspan><tspan x="264" fill="#d4d4d4" stroke="#d4d4d4">,</tspan></text>
<text y="1023.2"><tspan x="96" fill="#8fd8da" stroke="#8fd8da">&quot;GroupName&quot;</tspan><tspan x="162" fill="#d4d4d4" stroke="#d4d4d4">:</tspan><tspan x="174" fill="#d4918c" stroke="#d4918c">&quot;{{Application}}-sg&quot;</tspan><tspan x="294" fill="#d4d4d4" stroke="#d4d4d4">,</tspan></text>
<text y="1033.2"><tspan x="96" fill="#8fd8da" stroke="#8fd8da">&quot;Description&quot;</tspan><tspan x="174" fill="#d4d4d4" stroke="#d4d4d4">:</tspan><tspan x="186" fill="#d4918c" stroke="#d4918c">&quot;Security group for application&quot;</tspan><tspan x="378" fill="#d4d4d4" stroke="#d4d4d4">,</tspan></text>
<text y="1043.2"><tspan x="96" fill="#8fd8da" stroke="#8fd8da">&quot;VpcId&quot;</tspan><tspan x="138" fill="#d4d4d4" stroke="#d4d4d4">:</tspan><tspan x="150" fill="#d4918c" stroke="#d4918c">&quot;{{getVpcId.VpcId}}&quot;</tspan></text>
<text y="1053.2"><tspan x="72" fill="#d4d4d4" stroke="#d4d4d4">}</tspan><tspan x="78" fill="#d4d4d4" stroke="#d4d4d4">,</tspan></text>
<text y="1063.2"><tspan x="72" fill="#8fd8da" stroke="#8fd8da">&quot;outputs&quot;</tspan><tspan x="126" fill="#d4d4d4" stroke="#d4d4d4">:</tspan><tspan x="138" fill="#d4d4d4" stroke="#d4d4d4">[</tspan></text>
<text y="1073.2"><tspan x="96" fill="#d4d4d4" stroke="#d4d4d4">{</tspan></text>
<text y="1083.2"><tspan x="120" fill="#8fd8da" stroke="#8fd8da">&quot;Name&quot;</tspan><tspan x="156" fill="#d4d4d4" stroke="#d4d4d4">:</tspan><tspan x="168" fill="#d4918c" stroke="#d4918c">&quot;GroupId&quot;</tspan><tspan x="222" fill="#d4d4d4" stroke="#d4d4d4">,</tspan></text>
<text y="1093.2"><tspan x="120" fill="#8fd8da" stroke="#8fd8da">&quot;Selector&quot;</tspan><tspan x="180" fill="#d4d4d4" stroke="#d4d4d4">:</tspan><tspan x="192" fill="#d4918c" stroke="#d4918c">&quot;$.GroupId&quot;</tspan><tspan x="258" fill="#d4d4d4" stroke="#d4d4d4">,</tspan></text>
<text y="1103.2"><tspan x="120" fill="#8fd8da" stroke="#8fd8da">&quot;Type&quot;</tspan><tspan x="156" fill="#d4d4d4" stroke="#d4d4d4">:</tspan><tspan x="168" fill="#d4918c" stroke="#d4918c">&quot;String&quot;</tspan></text>
<text y="1113.2"><tspan x="96" fill="#d4d4d4" stroke="#d4d4d4">}</tspan></text>
<text y="1123.2"><tspan x="72" fill="#d4d4d4" stroke="#d4d4d4">]</tspan></text>
<text y="1133.2"><tspan x="48" fill="#d4d4d4" stroke="#d4d4d4">}</tspan><tspan x="54" fill="#d4d4d4" stroke="#d4d4d4">,</tspan></text>
<text y="1143.2"><tspan x="48" fill="#d4d4d4" stroke="#d4d4d4">{</tspan></text>
<text y="1153.2"><tspan x="72" fill="#8fd8da" stroke="#8fd8da">&quot;name&quot;</tspan><tspan x="108" fill="#d4d4d4" stroke="#d4d4d4">:</tspan><tspan x="120" fill="#d4918c" stroke="#d4918c">&quot;authorizeIngress&quot;</tspan><tspan x="228" fill="#d4d4d4" stroke="#d4d4d4">,</tspan></text>
<text y="1163.2"><tspan x="72" fill="#8fd8da" stroke="#8fd8da">&quot;action&quot;</tspan><tspan x="120" fill="#d4d4d4" stroke="#d4d4d4">:</tspan><tspan x="132" fill="#d4918c" stroke="#d4918c">&quot;aws:executeAwsApi&quot;</tspan><tspan x="246" fill="#d4d4d4" stroke="#d4d4d4">,</tspan></text>
<text y="1173.2"><tspan x="72" fill="#8fd8da" stroke="#8fd8da">&quot;inputs&quot;</tspan><tspan x="120" fill="#d4d4d4" stroke="#d4d4d4">:</tspan><tspan x="132" fill="#d4d4d4" stroke="#d4d4d4">{</tspan></text>
<text y="1183.2"><tspan x="96" fill="#8fd8da" stroke="#8fd8da">&quot;Service&quot;</tspan><tspan x="150" fill="#d4d4d4" stroke="#d4d4d4">:</tspan><tspan x="162" fill="#d4918c" stroke="#d4918c">&quot;ec2&quot;</tspan><tspan x="192" fill="#d4d4d4" stroke="#d4d4d4">,</tspan></text>
<text y="1193.2"><tspan x="96" fill="#8fd8da" stroke="#8fd8da">&quot;Api&quot;</tspan><tspan x="126" fill="#d4d4d4" stroke="#d4d4d4">:</tspan><tspan x="138" fill="#d4918c" stroke="#d4918c">&quot;AuthorizeSecurityGroupIngress&quot;</tspan><tspan x="324" fill="#d4d4d4" stroke="#d4d4d4">,</tspan></text>
<text y="1203.2"><tspan x="96" fill="#8fd8da" stroke="#8fd8da">&quot;GroupId&quot;</tspan><tspan x="150" fill="#d4d4d4" stroke="#d4d4d4">:</tspan><tspan x="162" fill="#d4918c" stroke="#d4918c">&quot;{{createSecurityGroup.GroupId}}&quot;</tspan><tspan x="360" fill="#d4d4d4" stroke="#d4d4d4">,</tspan></text>
<text y="1213.2"><tspan x="96" fill="#8fd8da" stroke="#8fd8da">&quot;IpPermissions&quot;</tspan><tspan x="186" fill="#d4d4d4" stroke="#d4d4d4">:</tspan><tspan x="198" fill="#d4d4d4" stroke="#d4d4d4">[</tspan></text>
<text y="1223.2"><tspan x="120" fill="#d4d4d4" stroke="#d4d4d4">{</tspan></text>
<text y="1233.2"><tspan x="144" fill="#8fd8da" stroke="#8fd8da">&quot;IpProtocol&quot;</tspan><tspan x="216" fill="#d4d4d4" stroke="#d4d4d4">:</tspan><tspan x="228" fill="#d4918c" stroke="#d4918c">&quot;tcp&quot;</tspan><tspan x="258" fill="#d4d4d4" stroke="#d4d4d4">,</tspan></text>
<text y="1243.2"><tspan x="144" fill="#8fd8da" stroke="#8fd8da">&quot;FromPort&quot;</tspan><tspan x="204" fill="#d4d4d4" stroke="#d4d4d4">:</tspan><tspan x="216" fill="#b5cea8" stroke="#b5cea8">80</tspan><tspan x="228" fill="#d4d4d4" stroke="#d4d4d4">,</tspan></text>
<text y="1253.2"><tspan x="144" fill="#8fd8da" stroke="#8fd8da">&quot;ToPort&quot;</tspan><tspan x="192" fill="#d4d4d4" stroke="#d4d4d4">:</tspan><tspan x="204" fill="#b5cea8" stroke="#b5cea8">80</tspan><tspan x="216" fill="#d4d4d4" stroke="#d4d4d4">,</tspan></text>
<text y="1263.2"><tspan x="144" fill="#8fd8da" stroke="#8fd8da">&quot;IpRanges&quot;</tspan><tspan x="204" fill="#d4d4d4" stroke="#d4d4d4">:</tspan><tspan x="216" fill="#d4d4d4" stroke="#d4d4d4">[</tspan></text>
<text y="1273.2"><tspan x="168" fill="#d4d4d4" stroke="#d4d4d4">{</tspan></text>
<text y="1283.2"><tspan x="192" fill="#8fd8da" stroke="#8fd8da">&quot;CidrIp&quot;</tspan><tspan x="240" fill="#d4d4d4" stroke="#d4d4d4">:</tspan><tspan x="252" fill="#d4918c" stroke="#d4918c">&quot;0.0.0.0/0&quot;</tspan></text>
<text y="1293.2"><tspan x="168" fill="#d4d4d4" stroke="#d4d4d4">}</tspan></text>
<text y="1303.2"><tspan x="144" fill="#d4d4d4" stroke="#d4d4d4">]</tspan></text>
<text y="1313.2"><tspan x="120" fill="#d4d4d4" stroke="#d4d4d4">}</tspan></text>
<text y="1323.2"><tspan x="96" fill="#d4d4d4" stroke="#d4d4d4">]</tspan></text>
<text y="1333.2"><tspan x="72" fill="#d4d4d4" stroke="#d4d4d4">}</tspan></text>
<text y="1343.2"><tspan x="48" fill="#d4d4d4" stroke="#d4d4d4">}</tspan><tspan x="54" fill="#d4d4d4" stroke="#d4d4d4">,</tspan></text>
<text y="1353.2"><tspan x="48" fill="#d4d4d4" stroke="#d4d4d4">{</tspan></text>
<text y="1363.2"><tspan x="72" fill="#8fd8da" stroke="#8fd8da">&quot;name&quot;</tspan><tspan x="108" fill="#d4d4d4" stroke="#d4d4d4">:</tspan><tspan x="120" fill="#d4918c" stroke="#d4918c">&quot;launchInstance&quot;</tspan><tspan x="216" fill="#d4d4d4" stroke="#d4d4d4">,</tspan></text>
<text y="1373.2"><tspan x="72" fill="#8fd8da" stroke="#8fd8da">&quot;action&quot;</tspan><tspan x="120" fill="#d4d4d4" stroke="#d4d4d4">:</tspan><tspan x="132" fill="#d4918c" stroke="#d4918c">&quot;aws:runInstances&quot;</tspan><tspan x="240" fill="#d4d4d4" stroke="#d4d4d4">,</tspan></text>
<text y="1383.2"><tspan x="72" fill="#8fd8da" stroke="#8fd8da">&quot;inputs&quot;</tspan><tspan x="120" fill="#d4d4d4" stroke="#d4d4d4">:</tspan><tspan x="132" fill="#d4d4d4" stroke="#d4d4d4">{</tspan></text>
<text y="1393.2"><tspan x="96" fill="#8fd8da" stroke="#8fd8da">&quot;ImageId&quot;</tspan><tspan x="150" fill="#d4d4d4" stroke="#d4d4d4">:</tspan><tspan x="162" fill="#d4918c" stroke="#d4918c">&quot;{{getLatestLinuxAMI.AmiId}}&quot;</tspan><tspan x="336" fill="#d4d4d4" stroke="#d4d4d4">,</tspan></text>
<text y="1403.2"><tspan x="96" fill="#8fd8da" stroke="#8fd8da">&quot;InstanceType&quot;</tspan><tspan x="180" fill="#d4d4d4" stroke="#d4d4d4">:</tspan><tspan x="192" fill="#d4918c" stroke="#d4918c">&quot;t2.micro&quot;</tspan><tspan x="252" fill="#d4d4d4" stroke="#d4d4d4">,</tspan></text>
<text y="1413.2"><tspan x="96" fill="#8fd8da" stroke="#8fd8da">&quot;MinInstanceCount&quot;</tspan><tspan x="204" fill="#d4d4d4" stroke="#d4d4d4">:</tspan><tspan x="216" fill="#b5cea8" stroke="#b5cea8">1</tspan><tspan x="222" fill="#d4d4d4" stroke="#d4d4d4">,</tspan></text>
<text y="1423.2"><tspan x="96" fill="#8fd8da" stroke="#8fd8da">&quot;MaxInstanceCount&quot;</tspan><tspan x="204" fill="#d4d4d4" stroke="#d4d4d4">:</tspan><tspan x="216" fill="#b5cea8" stroke="#b5cea8">1</tspan><tspan x="222" fill="#d4d4d4" stroke="#d4d4d4">,</tspan></text>
<text y="1433.2"><tspan x="96" fill="#8fd8da" stroke="#8fd8da">&quot;SubnetId&quot;</tspan><tspan x="156" fill="#d4d4d4" stroke="#d4d4d4">:</tspan><tspan x="168" fill="#d4918c" stroke="#d4918c">&quot;{{getSubnetId.SubnetId}}&quot;</tspan><tspan x="324" fill="#d4d4d4" stroke="#d4d4d4">,</tspan></text>
<text y="1443.2"><tspan x="96" fill="#8fd8da" stroke="#8fd8da">&quot;IamInstanceProfileName&quot;</tspan><tspan x="240" fill="#d4d4d4" stroke="#d4d4d4">:</tspan><tspan x="252" fill="#d4918c" stroke="#d4918c">&quot;{{EC2IamRole}}&quot;</tspan><tspan x="348" fill="#d4d4d4" stroke="#d4d4d4">,</tspan></text>
<text y="1453.2"><tspan x="96" fill="#8fd8da" stroke="#8fd8da">&quot;KeyName&quot;</tspan><tspan x="150" fill="#d4d4d4" stroke="#d4d4d4">:</tspan><tspan x="162" fill="#d4918c" stroke="#d4918c">&quot;{{Application}}-key&quot;</tspan><tspan x="288" fill="#d4d4d4" stroke="#d4d4d4">,</tspan></text>
<text y="1463.2"><tspan x="96" fill="#8fd8da" stroke="#8fd8da">&quot;SecurityGroupIds&quot;</tspan><tspan x="204" fill="#d4d4d4" stroke="#d4d4d4">:</tspan><tspan x="216" fill="#d4d4d4" stroke="#d4d4d4">[</tspan><tspan x="222" fill="#d4918c" stroke="#d4918c">&quot;{{createSecurityGroup.GroupId}}&quot;</tspan><tspan x="420" fill="#d4d4d4" stroke="#d4d4d4">]</tspan></text>
<text y="1473.2"><tspan x="72" fill="#d4d4d4" stroke="#d4d4d4">}</tspan></text>
<text y="1483.2"><tspan x="48" fill="#d4d4d4" stroke="#d4d4d4">}</tspan><tspan x="54" fill="#d4d4d4" stroke="#d4d4d4">,</tspan></text>
<text y="1493.2"><tspan x="48" fill="#d4d4d4" stroke="#d4d4d4">{</tspan></text>
<text y="1503.2"><tspan x="72" fill="#8fd8da" stroke="#8fd8da">&quot;name&quot;</tspan><tspan x="108" fill="#d4d4d4" stroke="#d4d4d4">:</tspan><tspan x="120" fill="#d4918c" stroke="#d4918c">&quot;ChooseInstallStep&quot;</tspan><tspan x="234" fill="#d4d4d4" stroke="#d4d4d4">,</tspan></text>
<text y="1513.2"><tspan x="72" fill="#8fd8da" stroke="#8fd8da">&quot;action&quot;</tspan><tspan x="120" fill="#d4d4d4" stroke="#d4d4d4">:</tspan><tspan x="132" fill="#d4918c" stroke="#d4918c">&quot;aws:branch&quot;</tspan><tspan x="204" fill="#d4d4d4" stroke="#d4d4d4">,</tspan></text>
<text y="1523.2"><tspan x="72" fill="#8fd8da" stroke="#8fd8da">&quot;inputs&quot;</tspan><tspan x="120" fill="#d4d4d4" stroke="#d4d4d4">:</tspan><tspan x="132" fill="#d4d4d4" stroke="#d4d4d4">{</tspan></text>
<text y="1533.2"><tspan x="96" fill="#8fd8da" stroke="#8fd8da">&quot;Choices&quot;</tspan><tspan x="150" fill="#d4d4d4" stroke="#d4d4d4">:</tspan><tspan x="162" fill="#d4d4d4" stroke="#d4d4d4">[</tspan></text>
<text y="1543.2"><tspan x="120" fill="#d4d4d4" stroke="#d4d4d4">{</tspan></text>
<text y="1553.2"><tspan x="144" fill="#8fd8da" stroke="#8fd8da">&quot;NextStep&quot;</tspan><tspan x="204" fill="#d4d4d4" stroke="#d4d4d4">:</tspan><tspan x="216" fill="#d4918c" stroke="#d4918c">&quot;installMariaDB&quot;</tspan><tspan x="312" fill="#d4d4d4" stroke="#d4d4d4">,</tspan></text>
<text y="1563.2"><tspan x="144" fill="#8fd8da" stroke="#8fd8da">&quot;Variable&quot;</tspan><tspan x="204" fill="#d4d4d4" stroke="#d4d4d4">:</tspan><tspan x="216" fill="#d4918c" stroke="#d4918c">&quot;{{Application}}&quot;</tspan><tspan x="318" fill="#d4d4d4" stroke="#d4d4d4">,</tspan></text>
<text y="1573.2"><tspan x="144" fill="#8fd8da" stroke="#8fd8da">&quot;StringEquals&quot;</tspan><tspan x="228" fill="#d4d4d4" stroke="#d4d4d4">:</tspan><tspan x="240" fill="#d4918c" stroke="#d4918c">&quot;mariadb-server&quot;</tspan></text>
<text y="1583.2"><tspan x="120" fill="#d4d4d4" stroke="#d4d4d4">}</tspan><tspan x="126" fill="#d4d4d4" stroke="#d4d4d4">,</tspan></text>
<text y="1593.2"><tspan x="120" fill="#d4d4d4" stroke="#d4d4d4">{</tspan></text>
<text y="1603.2"><tspan x="144" fill="#8fd8da" stroke="#8fd8da">&quot;NextStep&quot;</tspan><tspan x="204" fill="#d4d4d4" stroke="#d4d4d4">:</tspan><tspan x="216" fill="#d4918c" stroke="#d4918c">&quot;installHttpd&quot;</tspan><tspan x="300" fill="#d4d4d4" stroke="#d4d4d4">,</tspan></text>
<text y="1613.2"><tspan x="144" fill="#8fd8da" stroke="#8fd8da">&quot;Variable&quot;</tspan><tspan x="204" fill="#d4d4d4" stroke="#d4d4d4">:</tspan><tspan x="216" fill="#d4918c" stroke="#d4918c">&quot;{{Application}}&quot;</tspan><tspan x="318" fill="#d4d4d4" stroke="#d4d4d4">,</tspan></text>
<text y="1623.2"><tspan x="144" fill="#8fd8da" stroke="#8fd8da">&quot;StringEquals&quot;</tspan><tspan x="228" fill="#d4d4d4" stroke="#d4d4d4">:</tspan><tspan x="240" fill="#d4918c" stroke="#d4918c">&quot;httpd&quot;</tspan></text>
<text y="1633.2"><tspan x="120" fill="#d4d4d4" stroke="#d4d4d4">}</tspan></text>
<text y="1643.2"><tspan x="96" fill="#d4d4d4" stroke="#d4d4d4">]</tspan><tspan x="102" fill="#d4d4d4" stroke="#d4d4d4">,</tspan></text>
<text y="1653.2"><tspan x="96" fill="#8fd8da" stroke="#8fd8da">&quot;Default&quot;</tspan><tspan x="150" fill="#d4d4d4" stroke="#d4d4d4">:</tspan><tspan x="162" fill="#d4918c" stroke="#d4918c">&quot;installHttpd&quot;</tspan></text>
<text y="1663.2"><tspan x="72" fill="#d4d4d4" stroke="#d4d4d4">}</tspan></text>
<text y="1673.2"><tspan x="48" fill="#d4d4d4" stroke="#d4d4d4">}</tspan><tspan x="54" fill="#d4d4d4" stroke="#d4d4d4">,</tspan></text>
<text y="1683.2"><tspan x="48" fill="#d4d4d4" stroke="#d4d4d4">{</tspan></text>
<text y="1693.2"><tspan x="72" fill="#8fd8da" stroke="#8fd8da">&quot;name&quot;</tspan><tspan x="108" fill="#d4d4d4" stroke="#d4d4d4">:</tspan><tspan x="120" fill="#d4918c" stroke="#d4918c">&quot;installMariaDB&quot;</tspan><tspan x="216" fill="#d4d4d4" stroke="#d4d4d4">,</tspan></text>
<text y="1703.2"><tspan x="72" fill="#8fd8da" stroke="#8fd8da">&quot;action&quot;</tspan><tspan x="120" fill="#d4d4d4" stroke="#d4d4d4">:</tspan><tspan x="132" fill="#d4918c" stroke="#d4918c">&quot;aws:runCommand&quot;</tspan><tspan x="228" fill="#d4d4d4" stroke="#d4d4d4">,</tspan></text>
<text y="1713.2"><tspan x="72" fill="#8fd8da" stroke="#8fd8da">&quot;onFailure&quot;</tspan><tspan x="138" fill="#d4d4d4" stroke="#d4d4d4">:</tspan><tspan x="150" fill="#d4918c" stroke="#d4918c">&quot;Abort&quot;</tspan><tspan x="192" fill="#d4d4d4" stroke="#d4d4d4">,</tspan></text>
<text y="1723.2"><tspan x="72" fill="#8fd8da" stroke="#8fd8da">&quot;timeoutSeconds&quot;</tspan><tspan x="168" fill="#d4d4d4" stroke="#d4d4d4">:</tspan><tspan x="180" fill="#b5cea8" stroke="#b5cea8">600</tspan><tspan x="198" fill="#d4d4d4" stroke="#d4d4d4">,</tspan></text>
<text y="1733.2"><tspan x="72" fill="#8fd8da" stroke="#8fd8da">&quot;inputs&quot;</tspan><tspan x="120" fill="#d4d4d4" stroke="#d4d4d4">:</tspan><tspan x="132" fill="#d4d4d4" stroke="#d4d4d4">{</tspan></text>
<text y="1743.2"><tspan x="96" fill="#8fd8da" stroke="#8fd8da">&quot;DocumentName&quot;</tspan><tspan x="180" fill="#d4d4d4" stroke="#d4d4d4">:</tspan><tspan x="192" fill="#d4918c" stroke="#d4918c">&quot;AWS-RunShellScript&quot;</tspan><tspan x="312" fill="#d4d4d4" stroke="#d4d4d4">,</tspan></text>
<text y="1753.2"><tspan x="96" fill="#8fd8da" stroke="#8fd8da">&quot;Comment&quot;</tspan><tspan x="150" fill="#d4d4d4" stroke="#d4d4d4">:</tspan><tspan x="162" fill="#d4918c" stroke="#d4918c">&quot;Install MariaDB server&quot;</tspan><tspan x="306" fill="#d4d4d4" stroke="#d4d4d4">,</tspan></text>
<text y="1763.2"><tspan x="96" fill="#8fd8da" stroke="#8fd8da">&quot;InstanceIds&quot;</tspan><tspan x="174" fill="#d4d4d4" stroke="#d4d4d4">:</tspan><tspan x="186" fill="#d4d4d4" stroke="#d4d4d4">[</tspan><tspan x="192" fill="#d4918c" stroke="#d4918c">&quot;{{launchInstance.InstanceIds}}&quot;</tspan><tspan x="384" fill="#d4d4d4" stroke="#d4d4d4">]</tspan><tspan x="390" fill="#d4d4d4" stroke="#d4d4d4">,</tspan></text>
<text y="1773.2"><tspan x="96" fill="#8fd8da" stroke="#8fd8da">&quot;Parameters&quot;</tspan><tspan x="168" fill="#d4d4d4" stroke="#d4d4d4">:</tspan><tspan x="180" fill="#d4d4d4" stroke="#d4d4d4">{</tspan></text>
<text y="1783.2"><tspan x="120" fill="#8fd8da" stroke="#8fd8da">&quot;commands&quot;</tspan><tspan x="180" fill="#d4d4d4" stroke="#d4d4d4">:</tspan><tspan x="192" fill="#d4d4d4" stroke="#d4d4d4">[</tspan></text>
<text y="1793.2"><tspan x="144" fill="#d4918c" stroke="#d4918c">&quot;sudo yum install -y mariadb-server &amp;&amp; sudo systemctl start mariadb&quot;</tspan><tspan x="552" fill="#d4d4d4" stroke="#d4d4d4">,</tspan></text>
<text y="1803.2"><tspan x="144" fill="#d4918c" stroke="#d4918c">&quot;PASSWORD=$(aws ssm get-parameter --name DBPassword --with-decryption --query Parameter.Value)&quot;</tspan><tspan x="714" fill="#d4d4d4" stroke="#d4d4d4">,</tspan></text>
<text y="1813.2"><tspan x="144" fill="#d4918c" stroke="#d4918c">&quot;mysqladmin -u root password $PASSWORD &amp;&amp; sudo systemctl enable mariadb &amp;&amp; echo done &gt;&gt; /tmp/out&quot;</tspan><tspan x="726" fill="#d4d4d4" stroke="#d4d4d4">,</tspan></text>
<text y="1823.2"><tspan x="144" fill="#d4918c" stroke="#d4918c">&quot;sudo mysql -u root -p$PASSWORD -e \&quot;CREATE DATABASE app;\&quot; &amp;&amp; echo created database &gt;&gt; /tmp/out&quot;</tspan></text>
<text y="1833.2"><tspan x="120" fill="#d4d4d4" stroke="#d4d4d4">]</tspan></text>
<text y="1843.2"><tspan x="96" fill="#d4d4d4" stroke="#d4d4d4">}</tspan><tspan x="102" fill="#d4d4d4" stroke="#d4d4d4">,</tspan></text>
<text y="1853.2"><tspan x="96" fill="#8fd8da" stroke="#8fd8da">&quot;OutputS3BucketName&quot;</tspan><tspan x="216" fill="#d4d4d4" stroke="#d4d4d4">:</tspan><tspan x="228" fill="#d4918c" stroke="#d4918c">&quot;ssm-automation-output&quot;</tspan><tspan x="366" fill="#d4d4d4" stroke="#d4d4d4">,</tspan></text>
<text y="1863.2"><tspan x="96" fill="#8fd8da" stroke="#8fd8da">&quot;OutputS3KeyPrefix&quot;</tspan><tspan x="210" fill="#d4d4d4" stroke="#d4d4d4">:</tspan><tspan x="222" fill="#d4918c" stroke="#d4918c">&quot;mariadb&quot;</tspan></text>
<text y="1873.2"><tspan x="72" fill="#d4d4d4" stroke="#d4d4d4">}</tspan><tspan x="78" fill="#d4d4d4" stroke="#d4d4d4">,</tspan></text>
<text y="1883.2"><tspan x="72" fill="#8fd8da" stroke="#8fd8da">&quot;isEnd&quot;</tspan><tspan x="114" fill="#d4d4d4" stroke="#d4d4d4">:</tspan><tspan x="126" fill="#569cd6" stroke="#569cd6">true</tspan></text>
<text y="1893.2"><tspan x="48" fill="#d4d4d4" stroke="#d4d4d4">}</tspan><tspan x="54" fill="#d4d4d4" stroke="#d4d4d4">,</tspan></text>
<text y="1903.2"><tspan x="48" fill="#d4d4d4" stroke="#d4d4d4">{</tspan></text>
<text y="1913.2"><tspan x="72" fill="#8fd8da" stroke="#8fd8da">&quot;name&quot;</tspan><tspan x="108" fill="#d4d4d4" stroke="#d4d4d4">:</tspan><tspan x="120" fill="#d4918c" stroke="#d4918c">&quot;installHttpd&quot;</tspan><tspan x="204" fill="#d4d4d4" stroke="#d4d4d4">,</tspan></text>
<text y="1923.2"><tspan x="72" fill="#8fd8da" stroke="#8fd8da">&quot;action&quot;</tspan><tspan x="120" fill="#d4d4d4" stroke="#d4d4d4">:</tspan><tspan x="132" fill="#d4918c" stroke="#d4918c">&quot;aws:runCommand&quot;</tspan><tspan x="228" fill="#d4d4d4" stroke="#d4d4d4">,</tspan></text>
<text y="1933.2"><tspan x="72" fill="#8fd8da" stroke="#8fd8da">&quot;onFailure&quot;</tspan><tspan x="138" fill="#d4d4d4" stroke="#d4d4d4">:</tspan><tspan x="150" fill="#d4918c" stroke="#d4918c">&quot;Abort&quot;</tspan><tspan x="192" fill="#d4d4d4" stroke="#d4d4d4">,</tspan></text>
<text y="1943.2"><tspan x="72" fill="#8fd8da" stroke="#8fd8da">&quot;timeoutSeconds&quot;</tspan><tspan x="168" fill="#d4d4d4" stroke="#d4d4d4">:</tspan><tspan x="180" fill="#b5cea8" stroke="#b5cea8">600</tspan><tspan x="198" fill="#d4d4d4" stroke="#d4d4d4">,</tspan></text>
<text y="1953.2"><tspan x="72" fill="#8fd8da" stroke="#8fd8da">&quot;inputs&quot;</tspan><tspan x="120" fill="#d4d4d4" stroke="#d4d4d4">:</tspan><tspan x="132" fill="#d4d4d4" stroke="#d4d4d4">{</tspan></text>
<text y="1963.2"><tspan x="96" fill="#8fd8da" stroke="#8fd8da">&quot;DocumentName&quot;</tspan><tspan x="180" fill="#d4d4d4" stroke="#d4d4d4">:</tspan><tspan x="192" fill="#d4918c" stroke="#d4918c">&quot;AWS-RunShellScript&quot;</tspan><tspan x="312" fill="#d4d4d4" stroke="#d4d4d4">,</tspan></text>
<text y="1973.2"><tspan x="96" fill="#8fd8da" stroke="#8fd8da">&quot;Comment&quot;</tspan><tspan x="150" fill="#d4d4d4" stroke="#d4d4d4">:</tspan><tspan x="162" fill="#d4918c" stroke="#d4918c">&quot;Install Apache httpd&quot;</tspan><tspan x="294" fill="#d4d4d4" stroke="#d4d4d4">,</tspan></text>
<text y="1983.2"><tspan x="96" fill="#8fd8da" stroke="#8fd8da">&quot;InstanceIds&quot;</tspan><tspan x="174" fill="#d4d4d4" stroke="#d4d4d4">:</tspan><tspan x="186" fill="#d4d4d4" stroke="#d4d4d4">[</tspan><tspan x="192" fill="#d4918c" stroke="#d4918c">&quot;{{launchInstance.InstanceIds}}&quot;</tspan><tspan x="384" fill="#d4d4d4" stroke="#d4d4d4">]</tspan><tspan x="390" fill="#d4d4d4" stroke="#d4d4d4">,</tspan></text>
<text y="1993.2"><tspan x="96" fill="#8fd8da" stroke="#8fd8da">&quot;Parameters&quot;</tspan><tspan x="168" fill="#d4d4d4" stroke="#d4d4d4">:</tspan><tspan x="180" fill="#d4d4d4" stroke="#d4d4d4">{</tspan></text>
<text y="2003.2"><tspan x="120" fill="#8fd8da" stroke="#8fd8da">&quot;commands&quot;</tspan><tspan x="180" fill="#d4d4d4" stroke="#d4d4d4">:</tspan><tspan x="192" fill="#d4d4d4" stroke="#d4d4d4">[</tspan></text>
<text y="2013.2"><tspan x="144" fill="#d4918c" stroke="#d4918c">&quot;sudo yum install -y httpd &amp;&amp; sudo systemctl start httpd&quot;</tspan><tspan x="486" fill="#d4d4d4" stroke="#d4d4d4">,</tspan></text>
<text y="2023.2"><tspan x="144" fill="#d4918c" stroke="#d4918c">&quot;sudo systemctl enable httpd &amp;&amp; echo &#x27;&lt;h1&gt;Hello from SSM&lt;/h1&gt;&#x27; &gt; /var/www/html/index.html&quot;</tspan><tspan x="684" fill="#d4d4d4" stroke="#d4d4d4">,</tspan></text>
<text y="2033.2"><tspan x="144" fill="#d4918c" stroke="#d4918c">&quot;sudo chown -R apache:apache /var/www/html &amp;&amp; sudo systemctl restart httpd&quot;</tspan></text>
<text y="2043.2"><tspan x="120" fill="#d4d4d4" stroke="#d4d4d4">]</tspan></text>
<text y="2053.2"><tspan x="96" fill="#d4d4d4" stroke="#d4d4d4">}</tspan></text>
<text y="2063.2"><tspan x="72" fill="#d4d4d4" stroke="#d4d4d4">}</tspan><tspan x="78" fill="#d4d4d4" stroke="#d4d4d4">,</tspan></text>
<text y="2073.2"><tspan x="72" fill="#8fd8da" stroke="#8fd8da">&quot;isEnd&quot;</tspan><tspan x="114" fill="#d4d4d4" stroke="#d4d4d4">:</tspan><tspan x="126" fill="#569cd6" stroke="#569cd6">true</tspan></text>
<text y="2083.2"><tspan x="48" fill="#d4d4d4" stroke="#d4d4d4">}</tspan></text>
<text y="2093.2"><tspan x="24" fill="#d4d4d4" stroke="#d4d4d4">]</tspan></text>
<text y="2103.2"><tspan x="0" fill="#d4d4d4" stroke="#d4d4d4">}</tspan></text>
</g>
</svg>
<div class="abs" style="left:1828px;top:60.7px;width:20px;height:145px;background:#3c3c3c"></div>
<div class="abs" style="left:1828px;top:22px;width:19px;height:3px;background:#a0a0a0"></div>
<svg class="abs" style="left:304px;top:328px" width="18" height="36" viewBox="0 0 18 36">
 <path d="M2.5 2.5 Q9 2.5 9 8 V26 Q9 31.5 2.5 31.5 M15.5 2.5 Q9 2.5 9 8 M15.5 31.5 Q9 31.5 9 26 M6 19 H12" fill="none" stroke="#000" stroke-width="3.4"/>
 <path d="M2.5 2.5 Q9 2.5 9 8 V26 Q9 31.5 2.5 31.5 M15.5 2.5 Q9 2.5 9 8 M15.5 31.5 Q9 31.5 9 26 M6 19 H12" fill="none" stroke="#fff" stroke-width="1.7"/>
</svg>
</div>

<div id="status">
 <svg class="abs" style="left:22px;top:6px" width="76" height="20" viewBox="0 0 76 20">
  <circle cx="9.6" cy="9.4" r="8.8" fill="#fff"/>
  <path d="M5.4 5.2 L13.8 13.6 M13.8 5.2 L5.4 13.6" stroke="#2e72c5" stroke-width="2.4"/>
  <path d="M50 1 L58.5 17.5 H41.5 Z" fill="#fff" stroke="#fff" stroke-width="1.5" stroke-linejoin="round"/>
  <rect x="49" y="6" width="2" height="7" fill="#2e72c5"/><rect x="49" y="14.2" width="2" height="2" fill="#2e72c5"/>
 </svg>
 <div class="st" style="left:46px">0</div>
 <div class="st" style="left:86px">0</div>
 <div class="st" style="left:1230px">Ln 7, Col 30</div>
 <div class="st" style="left:1344px">Spaces: 4</div>
 <div class="st" style="left:1445px">UTF-8</div>
 <div class="st" style="left:1519px">LF</div>
 <div class="st" style="left:1561px">Json</div>
 <div class="st" style="left:1621px">AWS Credentials: default</div>
 <svg class="abs" style="left:1836px;top:6px" width="22" height="20" viewBox="0 0 22 20">
  <circle cx="10.9" cy="9.6" r="8.9" fill="#fff"/>
  <circle cx="7.8" cy="6.5" r="1.2" fill="#2e72c5"/><circle cx="13.8" cy="6.5" r="1.2" fill="#2e72c5"/>
  <path d="M6 10.5 Q10.9 15.5 15.5 10.5" fill="none" stroke="#2e72c5" stroke-width="1.5"/>
 </svg>
 <svg class="abs" style="left:1878px;top:6px" width="22" height="20" viewBox="0 0 22 20">
  <path d="M10.5 0.8 C7 2 5.3 5.5 4.8 9.5 C4.4 12.3 3 13.8 1.8 15 H19.2 C18 13.8 16.6 12.3 16.2 9.5 C15.7 5.5 14 2 10.5 0.8 Z" fill="#fff"/>
  <rect x="8.3" y="15.8" width="4.4" height="2.5" rx="1" fill="#fff"/>
 </svg>
</div>
</body></html>
